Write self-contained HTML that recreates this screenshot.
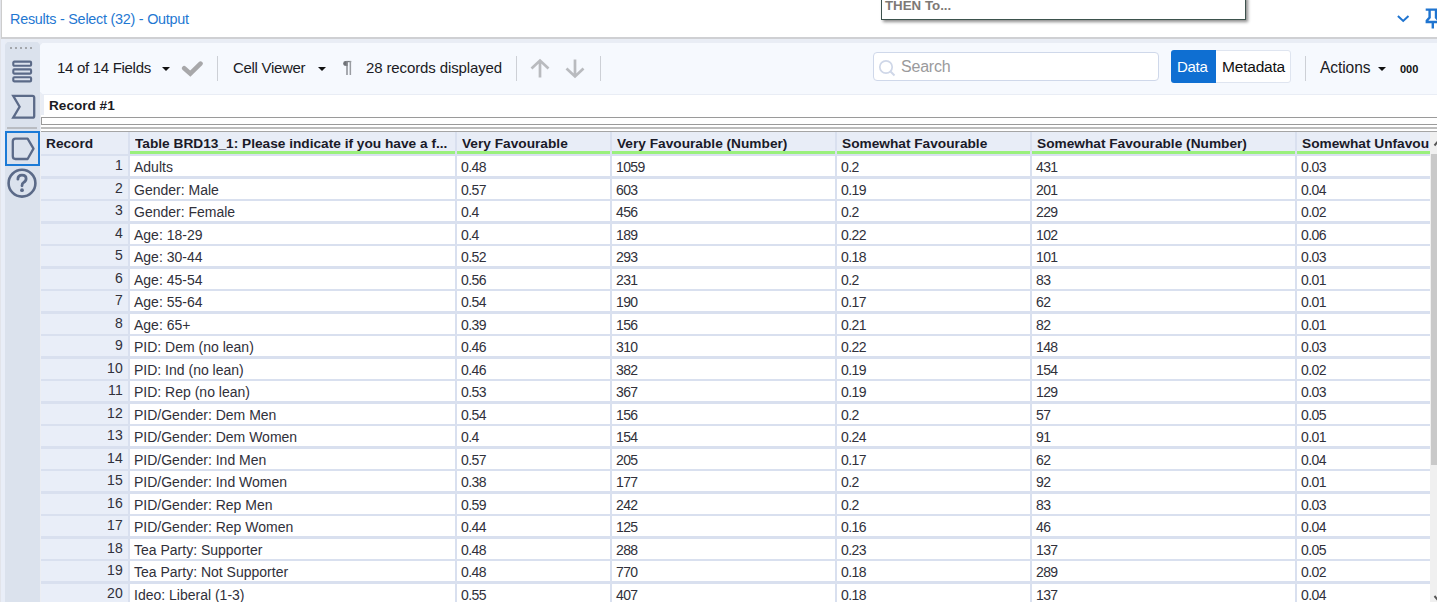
<!DOCTYPE html>
<html><head><meta charset="utf-8"><style>
*{margin:0;padding:0;box-sizing:border-box}
html,body{width:1437px;height:602px;overflow:hidden;background:#e9edf5;font-family:"Liberation Sans",sans-serif;position:relative}
.a{position:absolute}
.t{white-space:nowrap;color:#1b1b24}
#title{left:1px;top:0;width:1436px;height:39px;background:#fff;border-left:1px solid #cdcdcd;border-bottom:2px solid #cfd0d3}
#ttext{left:10px;top:10.5px;font-size:14.4px;letter-spacing:-0.25px;color:#1f78d2;line-height:16px}
#tip{left:881px;top:-4px;width:365px;height:23.7px;background:#fff;border:1px solid #3d524d;box-shadow:2px 2px 3px rgba(0,0,0,.45)}
#tiptext{left:885px;top:-1.3px;font-size:13.3px;font-weight:bold;color:#7d7976;line-height:14px}
#side{left:5px;top:42px;width:35px;height:570px;background:#dbe2ed;clip-path:polygon(2.5px 0,32.5px 0,35px 2.5px,35px 100%,0 100%,0 2.5px)}
#tool{left:40px;top:43px;width:1400px;height:51px;background:#f6f9fe;clip-path:polygon(2.5px 0,100% 0,100% 100%,2.5px 100%,0 48.5px,0 2.5px)}
.tb{font-size:15px;letter-spacing:-0.3px;line-height:16px;top:59.7px}
.sep{width:1.3px;height:24.5px;top:56px;background:#cdd0d6}
.tri{width:0;height:0;border-left:4px solid transparent;border-right:4px solid transparent;border-top:4.5px solid #111;top:66.5px}
#rec1{left:44px;top:95px;width:1400px;height:20px;background:#fff}
#rec1t{left:49px;top:99px;font-size:13.6px;font-weight:bold;line-height:14px}
#band{left:41px;top:115px;width:1400px;height:17px;background:#fff}
#hbox{left:41px;top:117px;width:1400px;height:7.8px;border:1.9px solid #9a9a9a;background:#fff}
#l1{left:41px;top:127px;width:1400px;height:1.8px;background:#bdbdbd}
#l2{left:41px;top:131px;width:1400px;height:1.2px;background:#a5a5a5}
#grid{left:41px;top:132px;width:1390px;height:470px;background:#d9e0ef}
.hc{position:absolute;top:132px;height:21.5px;background:#e8edf7}
.hg{position:absolute;top:151.3px;height:2.3px;background:#9af07c}
.ht{position:absolute;top:136.3px;font-size:13.7px;font-weight:bold;line-height:16px;white-space:nowrap;color:#1a1a28;overflow:hidden}
.c{position:absolute;height:20px;background:#fff}
.rc{position:absolute;height:20px;background:#e9eef8}
.ct{position:absolute;font-size:14px;line-height:16px;white-space:nowrap;color:#30303a}
.num{letter-spacing:-0.6px}
#sb{left:1430px;top:132px;width:7px;height:470px;background:#f0f0f0}
#thumb{left:1431px;top:154px;width:6px;height:311px;background:#c9c9c9}
</style></head><body>

<div id="title" class="a"></div>
<div id="ttext" class="a t">Results - Select (32) - Output</div>
<div id="tip" class="a"></div><div id="tiptext" class="a t">THEN To...</div>
<svg class="a" style="left:1395px;top:12px" width="16" height="12" viewBox="0 0 16 12"><path d="M2.9 4 L8.2 9 L13.5 4" fill="none" stroke="#1f74d0" stroke-width="2"/></svg>
<svg class="a" style="left:1424px;top:7px" width="14" height="24" viewBox="0 0 14 24"><path d="M1.7 2.6 H20 M5.6 2.6 V10.6 L2.8 13.8 V15 H20 M12 2.6 V10.6 L14.8 13.8 M8.8 15 V21.5" fill="none" stroke="#1f74d0" stroke-width="2.4"/></svg>
<div class="a" style="left:0;top:0;width:1px;height:602px;background:#e2e4ea"></div><div class="a" style="left:1px;top:39px;width:4px;height:563px;background:#e9eef8"></div><div class="a" style="left:40px;top:94px;width:1px;height:508px;background:#eceef3"></div>
<div id="side" class="a"></div>
<div class="a" style="left:10px;top:46.5px;width:2.2px;height:2.2px;background:#a3a6ab"></div>
<div class="a" style="left:15px;top:46.5px;width:2.2px;height:2.2px;background:#a3a6ab"></div>
<div class="a" style="left:20px;top:46.5px;width:2.2px;height:2.2px;background:#a3a6ab"></div>
<div class="a" style="left:25px;top:46.5px;width:2.2px;height:2.2px;background:#a3a6ab"></div>
<div class="a" style="left:30px;top:46.5px;width:2.2px;height:2.2px;background:#a3a6ab"></div>
<svg class="a" style="left:11px;top:59px" width="23" height="25" viewBox="0 0 23 25"><rect x="2.3" y="2.6" width="17.8" height="4.2" rx="1" fill="none" stroke="#5b6a88" stroke-width="2.1"/><rect x="2.3" y="10.4" width="17.8" height="4.2" rx="1" fill="none" stroke="#5b6a88" stroke-width="2.1"/><rect x="2.3" y="18.2" width="17.8" height="4.2" rx="1" fill="none" stroke="#5b6a88" stroke-width="2.1"/></svg>
<svg class="a" style="left:9px;top:92px" width="28" height="29" viewBox="0 0 28 29"><path d="M4.2 3.8 H23.4 Q25.2 3.8 25.2 5.6 V23.9 Q25.2 25.7 23.4 25.7 H4.2 L10.6 14.75 Z" fill="none" stroke="#5b6a88" stroke-width="2.3" stroke-linejoin="miter"/></svg>
<div class="a" style="left:7px;top:127px;width:30px;height:1.5px;background:#b9bcc2"></div>
<div class="a" style="left:5px;top:131px;width:35px;height:35px;border:2px solid #1b7ad6;background:#dbe2ed"></div>
<svg class="a" style="left:10px;top:136px" width="26" height="26" viewBox="0 0 26 26"><path d="M5.5 2.6 H17.6 L23.5 12.6 L17.6 23 H5.5 Q2.8 23 2.8 20.3 V5.3 Q2.8 2.6 5.5 2.6 Z" fill="none" stroke="#5b6a88" stroke-width="2.3" stroke-linejoin="round"/></svg>
<svg class="a" style="left:6px;top:167px" width="32" height="32" viewBox="0 0 32 32"><circle cx="16" cy="16.2" r="13.4" fill="none" stroke="#5b6a88" stroke-width="2.6"/><path d="M11.9 12.2 Q11.9 8.1 16 8.1 Q20.1 8.1 20.1 11.8 Q20.1 14.2 17.6 15.4 Q16 16.2 16 18.8" fill="none" stroke="#5b6a88" stroke-width="2.8" stroke-linecap="round"/><circle cx="16" cy="23.2" r="1.9" fill="#5b6a88"/></svg>
<div id="tool" class="a"></div>
<div class="a t tb" style="left:57px">14 of 14 Fields</div>
<div class="a tri" style="left:162px"></div>
<svg class="a" style="left:181px;top:60px" width="23" height="18" viewBox="0 0 23 18"><path d="M3.2 8.2 L9.3 13.6 L19.5 3.6" fill="none" stroke="#a8a8aa" stroke-width="4.6" stroke-linecap="round" stroke-linejoin="miter"/></svg>
<div class="a sep" style="left:217px"></div>
<div class="a t tb" style="left:233px">Cell Viewer</div>
<div class="a tri" style="left:318px"></div>
<svg class="a" style="left:342px;top:60px" width="10" height="16" viewBox="0 0 10 16"><path d="M5.6 1 H3.6 Q1.2 1 1.2 3.4 Q1.2 5.9 4.4 5.9 H5.6 Z" fill="#6f7277"/><rect x="4.2" y="0.9" width="5" height="1.3" fill="#7a7d82"/><rect x="4.3" y="1" width="1.4" height="14" fill="#85888d"/><rect x="7.6" y="1" width="1.5" height="14" fill="#9a9da2"/></svg>
<div class="a t tb" style="left:366px;letter-spacing:-0.12px">28 records displayed</div>
<div class="a sep" style="left:515.7px"></div>
<svg class="a" style="left:527.5px;top:57px" width="24" height="23" viewBox="0 0 24 23"><path d="M12 3.5 V20.5 M3.5 11.5 L12 3.5 L20.5 11.5" fill="none" stroke="#b9bbbf" stroke-width="2.7"/></svg>
<svg class="a" style="left:562.5px;top:57px" width="24" height="23" viewBox="0 0 24 23"><path d="M12 2.5 V19.5 M3.5 11.5 L12 19.5 L20.5 11.5" fill="none" stroke="#b9bbbf" stroke-width="2.7"/></svg>
<div class="a sep" style="left:599.7px"></div>
<div class="a" style="left:873px;top:52px;width:286px;height:29px;background:#fff;border:1px solid #cfd8ea;border-radius:4px"></div>
<svg class="a" style="left:876.5px;top:57.5px" width="20" height="20" viewBox="0 0 20 20"><circle cx="9" cy="9" r="6.2" fill="none" stroke="#cfd7e8" stroke-width="1.7"/><path d="M13.5 13.5 L17.5 17.5" stroke="#cfd7e8" stroke-width="1.9"/></svg>
<div class="a t tb" style="left:901px;top:59.3px;color:#9a9a9c;font-size:16px;letter-spacing:-0.2px">Search</div>
<div class="a" style="left:1215px;top:50px;width:76px;height:33px;background:#fff;border:1px solid #dfe5f0;border-radius:0 3px 3px 0"></div>
<div class="a" style="left:1171px;top:50px;width:45px;height:33px;background:#0f6fd2;border-radius:3px 0 0 3px"></div>
<div class="a t tb" style="left:1177px;top:59px;color:#fff">Data</div>
<div class="a t tb" style="left:1222px;top:59px;color:#111;font-size:15.5px;letter-spacing:-0.2px">Metadata</div>
<div class="a sep" style="left:1305px"></div>
<div class="a t tb" style="left:1320px;font-size:15.6px;letter-spacing:-0.1px">Actions</div>
<div class="a tri" style="left:1378px"></div>
<div class="a t" style="left:1400px;top:63px;font-size:11px;font-weight:bold;line-height:12px;color:#111">000</div>
<div id="rec1" class="a"></div><div id="rec1t" class="a t">Record #1</div>
<div id="band" class="a"></div><div id="hbox" class="a"></div><div id="l1" class="a"></div><div id="l2" class="a"></div>
<div id="grid" class="a"></div>
<div class="hc" style="left:41px;width:87px"></div>
<div class="ht" style="left:46px;width:82px">Record</div>
<div class="hc" style="left:130px;width:325px"></div>
<div class="hg" style="left:130px;width:325px"></div>
<div class="ht" style="left:135px;width:320px">Table BRD13_1: Please indicate if you have a f...</div>
<div class="hc" style="left:457px;width:153px"></div>
<div class="hg" style="left:457px;width:153px"></div>
<div class="ht" style="left:462px;width:148px">Very Favourable</div>
<div class="hc" style="left:612px;width:223px"></div>
<div class="hg" style="left:612px;width:223px"></div>
<div class="ht" style="left:617px;width:218px">Very Favourable (Number)</div>
<div class="hc" style="left:837px;width:193px"></div>
<div class="hg" style="left:837px;width:193px"></div>
<div class="ht" style="left:842px;width:188px">Somewhat Favourable</div>
<div class="hc" style="left:1032px;width:263px"></div>
<div class="hg" style="left:1032px;width:263px"></div>
<div class="ht" style="left:1037px;width:258px">Somewhat Favourable (Number)</div>
<div class="hc" style="left:1297px;width:133px"></div>
<div class="hg" style="left:1297px;width:133px"></div>
<div class="ht" style="left:1302px;width:128px">Somewhat Unfavou</div>
<div class="rc" style="left:41px;top:156.0px;width:87px"></div>
<div class="ct" style="left:41px;top:157.4px;width:82px;text-align:right;letter-spacing:0.2px">1</div>
<div class="c" style="left:130px;top:156.0px;width:325px"></div>
<div class="ct" style="left:134px;top:159.4px">Adults</div>
<div class="c" style="left:457px;top:156.0px;width:153px"></div>
<div class="ct num" style="left:461px;top:159.4px">0.48</div>
<div class="c" style="left:612px;top:156.0px;width:223px"></div>
<div class="ct num" style="left:616px;top:159.4px">1059</div>
<div class="c" style="left:837px;top:156.0px;width:193px"></div>
<div class="ct num" style="left:841px;top:159.4px">0.2</div>
<div class="c" style="left:1032px;top:156.0px;width:263px"></div>
<div class="ct num" style="left:1036px;top:159.4px">431</div>
<div class="c" style="left:1297px;top:156.0px;width:133px"></div>
<div class="ct num" style="left:1301px;top:159.4px">0.03</div>
<div class="rc" style="left:41px;top:178.5px;width:87px"></div>
<div class="ct" style="left:41px;top:179.9px;width:82px;text-align:right;letter-spacing:0.2px">2</div>
<div class="c" style="left:130px;top:178.5px;width:325px"></div>
<div class="ct" style="left:134px;top:181.9px">Gender: Male</div>
<div class="c" style="left:457px;top:178.5px;width:153px"></div>
<div class="ct num" style="left:461px;top:181.9px">0.57</div>
<div class="c" style="left:612px;top:178.5px;width:223px"></div>
<div class="ct num" style="left:616px;top:181.9px">603</div>
<div class="c" style="left:837px;top:178.5px;width:193px"></div>
<div class="ct num" style="left:841px;top:181.9px">0.19</div>
<div class="c" style="left:1032px;top:178.5px;width:263px"></div>
<div class="ct num" style="left:1036px;top:181.9px">201</div>
<div class="c" style="left:1297px;top:178.5px;width:133px"></div>
<div class="ct num" style="left:1301px;top:181.9px">0.04</div>
<div class="rc" style="left:41px;top:201.0px;width:87px"></div>
<div class="ct" style="left:41px;top:202.4px;width:82px;text-align:right;letter-spacing:0.2px">3</div>
<div class="c" style="left:130px;top:201.0px;width:325px"></div>
<div class="ct" style="left:134px;top:204.4px">Gender: Female</div>
<div class="c" style="left:457px;top:201.0px;width:153px"></div>
<div class="ct num" style="left:461px;top:204.4px">0.4</div>
<div class="c" style="left:612px;top:201.0px;width:223px"></div>
<div class="ct num" style="left:616px;top:204.4px">456</div>
<div class="c" style="left:837px;top:201.0px;width:193px"></div>
<div class="ct num" style="left:841px;top:204.4px">0.2</div>
<div class="c" style="left:1032px;top:201.0px;width:263px"></div>
<div class="ct num" style="left:1036px;top:204.4px">229</div>
<div class="c" style="left:1297px;top:201.0px;width:133px"></div>
<div class="ct num" style="left:1301px;top:204.4px">0.02</div>
<div class="rc" style="left:41px;top:223.5px;width:87px"></div>
<div class="ct" style="left:41px;top:224.9px;width:82px;text-align:right;letter-spacing:0.2px">4</div>
<div class="c" style="left:130px;top:223.5px;width:325px"></div>
<div class="ct" style="left:134px;top:226.9px">Age: 18-29</div>
<div class="c" style="left:457px;top:223.5px;width:153px"></div>
<div class="ct num" style="left:461px;top:226.9px">0.4</div>
<div class="c" style="left:612px;top:223.5px;width:223px"></div>
<div class="ct num" style="left:616px;top:226.9px">189</div>
<div class="c" style="left:837px;top:223.5px;width:193px"></div>
<div class="ct num" style="left:841px;top:226.9px">0.22</div>
<div class="c" style="left:1032px;top:223.5px;width:263px"></div>
<div class="ct num" style="left:1036px;top:226.9px">102</div>
<div class="c" style="left:1297px;top:223.5px;width:133px"></div>
<div class="ct num" style="left:1301px;top:226.9px">0.06</div>
<div class="rc" style="left:41px;top:246.0px;width:87px"></div>
<div class="ct" style="left:41px;top:247.4px;width:82px;text-align:right;letter-spacing:0.2px">5</div>
<div class="c" style="left:130px;top:246.0px;width:325px"></div>
<div class="ct" style="left:134px;top:249.4px">Age: 30-44</div>
<div class="c" style="left:457px;top:246.0px;width:153px"></div>
<div class="ct num" style="left:461px;top:249.4px">0.52</div>
<div class="c" style="left:612px;top:246.0px;width:223px"></div>
<div class="ct num" style="left:616px;top:249.4px">293</div>
<div class="c" style="left:837px;top:246.0px;width:193px"></div>
<div class="ct num" style="left:841px;top:249.4px">0.18</div>
<div class="c" style="left:1032px;top:246.0px;width:263px"></div>
<div class="ct num" style="left:1036px;top:249.4px">101</div>
<div class="c" style="left:1297px;top:246.0px;width:133px"></div>
<div class="ct num" style="left:1301px;top:249.4px">0.03</div>
<div class="rc" style="left:41px;top:268.5px;width:87px"></div>
<div class="ct" style="left:41px;top:269.9px;width:82px;text-align:right;letter-spacing:0.2px">6</div>
<div class="c" style="left:130px;top:268.5px;width:325px"></div>
<div class="ct" style="left:134px;top:271.9px">Age: 45-54</div>
<div class="c" style="left:457px;top:268.5px;width:153px"></div>
<div class="ct num" style="left:461px;top:271.9px">0.56</div>
<div class="c" style="left:612px;top:268.5px;width:223px"></div>
<div class="ct num" style="left:616px;top:271.9px">231</div>
<div class="c" style="left:837px;top:268.5px;width:193px"></div>
<div class="ct num" style="left:841px;top:271.9px">0.2</div>
<div class="c" style="left:1032px;top:268.5px;width:263px"></div>
<div class="ct num" style="left:1036px;top:271.9px">83</div>
<div class="c" style="left:1297px;top:268.5px;width:133px"></div>
<div class="ct num" style="left:1301px;top:271.9px">0.01</div>
<div class="rc" style="left:41px;top:291.0px;width:87px"></div>
<div class="ct" style="left:41px;top:292.4px;width:82px;text-align:right;letter-spacing:0.2px">7</div>
<div class="c" style="left:130px;top:291.0px;width:325px"></div>
<div class="ct" style="left:134px;top:294.4px">Age: 55-64</div>
<div class="c" style="left:457px;top:291.0px;width:153px"></div>
<div class="ct num" style="left:461px;top:294.4px">0.54</div>
<div class="c" style="left:612px;top:291.0px;width:223px"></div>
<div class="ct num" style="left:616px;top:294.4px">190</div>
<div class="c" style="left:837px;top:291.0px;width:193px"></div>
<div class="ct num" style="left:841px;top:294.4px">0.17</div>
<div class="c" style="left:1032px;top:291.0px;width:263px"></div>
<div class="ct num" style="left:1036px;top:294.4px">62</div>
<div class="c" style="left:1297px;top:291.0px;width:133px"></div>
<div class="ct num" style="left:1301px;top:294.4px">0.01</div>
<div class="rc" style="left:41px;top:313.5px;width:87px"></div>
<div class="ct" style="left:41px;top:314.9px;width:82px;text-align:right;letter-spacing:0.2px">8</div>
<div class="c" style="left:130px;top:313.5px;width:325px"></div>
<div class="ct" style="left:134px;top:316.9px">Age: 65+</div>
<div class="c" style="left:457px;top:313.5px;width:153px"></div>
<div class="ct num" style="left:461px;top:316.9px">0.39</div>
<div class="c" style="left:612px;top:313.5px;width:223px"></div>
<div class="ct num" style="left:616px;top:316.9px">156</div>
<div class="c" style="left:837px;top:313.5px;width:193px"></div>
<div class="ct num" style="left:841px;top:316.9px">0.21</div>
<div class="c" style="left:1032px;top:313.5px;width:263px"></div>
<div class="ct num" style="left:1036px;top:316.9px">82</div>
<div class="c" style="left:1297px;top:313.5px;width:133px"></div>
<div class="ct num" style="left:1301px;top:316.9px">0.01</div>
<div class="rc" style="left:41px;top:336.0px;width:87px"></div>
<div class="ct" style="left:41px;top:337.4px;width:82px;text-align:right;letter-spacing:0.2px">9</div>
<div class="c" style="left:130px;top:336.0px;width:325px"></div>
<div class="ct" style="left:134px;top:339.4px">PID: Dem (no lean)</div>
<div class="c" style="left:457px;top:336.0px;width:153px"></div>
<div class="ct num" style="left:461px;top:339.4px">0.46</div>
<div class="c" style="left:612px;top:336.0px;width:223px"></div>
<div class="ct num" style="left:616px;top:339.4px">310</div>
<div class="c" style="left:837px;top:336.0px;width:193px"></div>
<div class="ct num" style="left:841px;top:339.4px">0.22</div>
<div class="c" style="left:1032px;top:336.0px;width:263px"></div>
<div class="ct num" style="left:1036px;top:339.4px">148</div>
<div class="c" style="left:1297px;top:336.0px;width:133px"></div>
<div class="ct num" style="left:1301px;top:339.4px">0.03</div>
<div class="rc" style="left:41px;top:358.5px;width:87px"></div>
<div class="ct" style="left:41px;top:359.9px;width:82px;text-align:right;letter-spacing:0.2px">10</div>
<div class="c" style="left:130px;top:358.5px;width:325px"></div>
<div class="ct" style="left:134px;top:361.9px">PID: Ind (no lean)</div>
<div class="c" style="left:457px;top:358.5px;width:153px"></div>
<div class="ct num" style="left:461px;top:361.9px">0.46</div>
<div class="c" style="left:612px;top:358.5px;width:223px"></div>
<div class="ct num" style="left:616px;top:361.9px">382</div>
<div class="c" style="left:837px;top:358.5px;width:193px"></div>
<div class="ct num" style="left:841px;top:361.9px">0.19</div>
<div class="c" style="left:1032px;top:358.5px;width:263px"></div>
<div class="ct num" style="left:1036px;top:361.9px">154</div>
<div class="c" style="left:1297px;top:358.5px;width:133px"></div>
<div class="ct num" style="left:1301px;top:361.9px">0.02</div>
<div class="rc" style="left:41px;top:381.0px;width:87px"></div>
<div class="ct" style="left:41px;top:382.4px;width:82px;text-align:right;letter-spacing:0.2px">11</div>
<div class="c" style="left:130px;top:381.0px;width:325px"></div>
<div class="ct" style="left:134px;top:384.4px">PID: Rep (no lean)</div>
<div class="c" style="left:457px;top:381.0px;width:153px"></div>
<div class="ct num" style="left:461px;top:384.4px">0.53</div>
<div class="c" style="left:612px;top:381.0px;width:223px"></div>
<div class="ct num" style="left:616px;top:384.4px">367</div>
<div class="c" style="left:837px;top:381.0px;width:193px"></div>
<div class="ct num" style="left:841px;top:384.4px">0.19</div>
<div class="c" style="left:1032px;top:381.0px;width:263px"></div>
<div class="ct num" style="left:1036px;top:384.4px">129</div>
<div class="c" style="left:1297px;top:381.0px;width:133px"></div>
<div class="ct num" style="left:1301px;top:384.4px">0.03</div>
<div class="rc" style="left:41px;top:403.5px;width:87px"></div>
<div class="ct" style="left:41px;top:404.9px;width:82px;text-align:right;letter-spacing:0.2px">12</div>
<div class="c" style="left:130px;top:403.5px;width:325px"></div>
<div class="ct" style="left:134px;top:406.9px">PID/Gender: Dem Men</div>
<div class="c" style="left:457px;top:403.5px;width:153px"></div>
<div class="ct num" style="left:461px;top:406.9px">0.54</div>
<div class="c" style="left:612px;top:403.5px;width:223px"></div>
<div class="ct num" style="left:616px;top:406.9px">156</div>
<div class="c" style="left:837px;top:403.5px;width:193px"></div>
<div class="ct num" style="left:841px;top:406.9px">0.2</div>
<div class="c" style="left:1032px;top:403.5px;width:263px"></div>
<div class="ct num" style="left:1036px;top:406.9px">57</div>
<div class="c" style="left:1297px;top:403.5px;width:133px"></div>
<div class="ct num" style="left:1301px;top:406.9px">0.05</div>
<div class="rc" style="left:41px;top:426.0px;width:87px"></div>
<div class="ct" style="left:41px;top:427.4px;width:82px;text-align:right;letter-spacing:0.2px">13</div>
<div class="c" style="left:130px;top:426.0px;width:325px"></div>
<div class="ct" style="left:134px;top:429.4px">PID/Gender: Dem Women</div>
<div class="c" style="left:457px;top:426.0px;width:153px"></div>
<div class="ct num" style="left:461px;top:429.4px">0.4</div>
<div class="c" style="left:612px;top:426.0px;width:223px"></div>
<div class="ct num" style="left:616px;top:429.4px">154</div>
<div class="c" style="left:837px;top:426.0px;width:193px"></div>
<div class="ct num" style="left:841px;top:429.4px">0.24</div>
<div class="c" style="left:1032px;top:426.0px;width:263px"></div>
<div class="ct num" style="left:1036px;top:429.4px">91</div>
<div class="c" style="left:1297px;top:426.0px;width:133px"></div>
<div class="ct num" style="left:1301px;top:429.4px">0.01</div>
<div class="rc" style="left:41px;top:448.5px;width:87px"></div>
<div class="ct" style="left:41px;top:449.9px;width:82px;text-align:right;letter-spacing:0.2px">14</div>
<div class="c" style="left:130px;top:448.5px;width:325px"></div>
<div class="ct" style="left:134px;top:451.9px">PID/Gender: Ind Men</div>
<div class="c" style="left:457px;top:448.5px;width:153px"></div>
<div class="ct num" style="left:461px;top:451.9px">0.57</div>
<div class="c" style="left:612px;top:448.5px;width:223px"></div>
<div class="ct num" style="left:616px;top:451.9px">205</div>
<div class="c" style="left:837px;top:448.5px;width:193px"></div>
<div class="ct num" style="left:841px;top:451.9px">0.17</div>
<div class="c" style="left:1032px;top:448.5px;width:263px"></div>
<div class="ct num" style="left:1036px;top:451.9px">62</div>
<div class="c" style="left:1297px;top:448.5px;width:133px"></div>
<div class="ct num" style="left:1301px;top:451.9px">0.04</div>
<div class="rc" style="left:41px;top:471.0px;width:87px"></div>
<div class="ct" style="left:41px;top:472.4px;width:82px;text-align:right;letter-spacing:0.2px">15</div>
<div class="c" style="left:130px;top:471.0px;width:325px"></div>
<div class="ct" style="left:134px;top:474.4px">PID/Gender: Ind Women</div>
<div class="c" style="left:457px;top:471.0px;width:153px"></div>
<div class="ct num" style="left:461px;top:474.4px">0.38</div>
<div class="c" style="left:612px;top:471.0px;width:223px"></div>
<div class="ct num" style="left:616px;top:474.4px">177</div>
<div class="c" style="left:837px;top:471.0px;width:193px"></div>
<div class="ct num" style="left:841px;top:474.4px">0.2</div>
<div class="c" style="left:1032px;top:471.0px;width:263px"></div>
<div class="ct num" style="left:1036px;top:474.4px">92</div>
<div class="c" style="left:1297px;top:471.0px;width:133px"></div>
<div class="ct num" style="left:1301px;top:474.4px">0.01</div>
<div class="rc" style="left:41px;top:493.5px;width:87px"></div>
<div class="ct" style="left:41px;top:494.9px;width:82px;text-align:right;letter-spacing:0.2px">16</div>
<div class="c" style="left:130px;top:493.5px;width:325px"></div>
<div class="ct" style="left:134px;top:496.9px">PID/Gender: Rep Men</div>
<div class="c" style="left:457px;top:493.5px;width:153px"></div>
<div class="ct num" style="left:461px;top:496.9px">0.59</div>
<div class="c" style="left:612px;top:493.5px;width:223px"></div>
<div class="ct num" style="left:616px;top:496.9px">242</div>
<div class="c" style="left:837px;top:493.5px;width:193px"></div>
<div class="ct num" style="left:841px;top:496.9px">0.2</div>
<div class="c" style="left:1032px;top:493.5px;width:263px"></div>
<div class="ct num" style="left:1036px;top:496.9px">83</div>
<div class="c" style="left:1297px;top:493.5px;width:133px"></div>
<div class="ct num" style="left:1301px;top:496.9px">0.03</div>
<div class="rc" style="left:41px;top:516.0px;width:87px"></div>
<div class="ct" style="left:41px;top:517.4px;width:82px;text-align:right;letter-spacing:0.2px">17</div>
<div class="c" style="left:130px;top:516.0px;width:325px"></div>
<div class="ct" style="left:134px;top:519.4px">PID/Gender: Rep Women</div>
<div class="c" style="left:457px;top:516.0px;width:153px"></div>
<div class="ct num" style="left:461px;top:519.4px">0.44</div>
<div class="c" style="left:612px;top:516.0px;width:223px"></div>
<div class="ct num" style="left:616px;top:519.4px">125</div>
<div class="c" style="left:837px;top:516.0px;width:193px"></div>
<div class="ct num" style="left:841px;top:519.4px">0.16</div>
<div class="c" style="left:1032px;top:516.0px;width:263px"></div>
<div class="ct num" style="left:1036px;top:519.4px">46</div>
<div class="c" style="left:1297px;top:516.0px;width:133px"></div>
<div class="ct num" style="left:1301px;top:519.4px">0.04</div>
<div class="rc" style="left:41px;top:538.5px;width:87px"></div>
<div class="ct" style="left:41px;top:539.9px;width:82px;text-align:right;letter-spacing:0.2px">18</div>
<div class="c" style="left:130px;top:538.5px;width:325px"></div>
<div class="ct" style="left:134px;top:541.9px">Tea Party: Supporter</div>
<div class="c" style="left:457px;top:538.5px;width:153px"></div>
<div class="ct num" style="left:461px;top:541.9px">0.48</div>
<div class="c" style="left:612px;top:538.5px;width:223px"></div>
<div class="ct num" style="left:616px;top:541.9px">288</div>
<div class="c" style="left:837px;top:538.5px;width:193px"></div>
<div class="ct num" style="left:841px;top:541.9px">0.23</div>
<div class="c" style="left:1032px;top:538.5px;width:263px"></div>
<div class="ct num" style="left:1036px;top:541.9px">137</div>
<div class="c" style="left:1297px;top:538.5px;width:133px"></div>
<div class="ct num" style="left:1301px;top:541.9px">0.05</div>
<div class="rc" style="left:41px;top:561.0px;width:87px"></div>
<div class="ct" style="left:41px;top:562.4px;width:82px;text-align:right;letter-spacing:0.2px">19</div>
<div class="c" style="left:130px;top:561.0px;width:325px"></div>
<div class="ct" style="left:134px;top:564.4px">Tea Party: Not Supporter</div>
<div class="c" style="left:457px;top:561.0px;width:153px"></div>
<div class="ct num" style="left:461px;top:564.4px">0.48</div>
<div class="c" style="left:612px;top:561.0px;width:223px"></div>
<div class="ct num" style="left:616px;top:564.4px">770</div>
<div class="c" style="left:837px;top:561.0px;width:193px"></div>
<div class="ct num" style="left:841px;top:564.4px">0.18</div>
<div class="c" style="left:1032px;top:561.0px;width:263px"></div>
<div class="ct num" style="left:1036px;top:564.4px">289</div>
<div class="c" style="left:1297px;top:561.0px;width:133px"></div>
<div class="ct num" style="left:1301px;top:564.4px">0.02</div>
<div class="rc" style="left:41px;top:583.5px;width:87px"></div>
<div class="ct" style="left:41px;top:584.9px;width:82px;text-align:right;letter-spacing:0.2px">20</div>
<div class="c" style="left:130px;top:583.5px;width:325px"></div>
<div class="ct" style="left:134px;top:586.9px">Ideo: Liberal (1-3)</div>
<div class="c" style="left:457px;top:583.5px;width:153px"></div>
<div class="ct num" style="left:461px;top:586.9px">0.55</div>
<div class="c" style="left:612px;top:583.5px;width:223px"></div>
<div class="ct num" style="left:616px;top:586.9px">407</div>
<div class="c" style="left:837px;top:583.5px;width:193px"></div>
<div class="ct num" style="left:841px;top:586.9px">0.18</div>
<div class="c" style="left:1032px;top:583.5px;width:263px"></div>
<div class="ct num" style="left:1036px;top:586.9px">137</div>
<div class="c" style="left:1297px;top:583.5px;width:133px"></div>
<div class="ct num" style="left:1301px;top:586.9px">0.04</div>
<div id="sb" class="a"></div><div id="thumb" class="a"></div>
<svg class="a" style="left:1430px;top:138px" width="7" height="12" viewBox="0 0 7 12"><path d="M4.5 7.5 L7.5 4 L10.5 7.5" fill="none" stroke="#555" stroke-width="2"/></svg>
<svg class="a" style="left:1430px;top:590px" width="7" height="12" viewBox="0 0 7 12"><path d="M4.5 6 L7.5 9.5 L10.5 6" fill="none" stroke="#555" stroke-width="2"/></svg>
</body></html>
